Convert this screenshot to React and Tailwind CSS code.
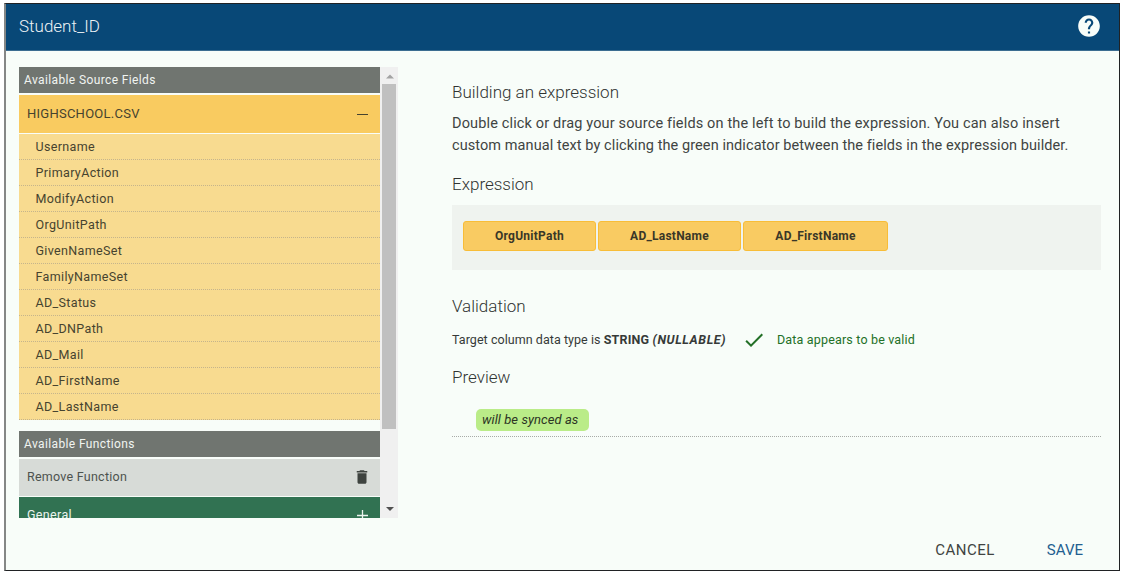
import React from "react";
import { MdCheck, MdDelete, MdHelp } from "react-icons/md";

const sourceFields = [
  "Username",
  "PrimaryAction",
  "ModifyAction",
  "OrgUnitPath",
  "GivenNameSet",
  "FamilyNameSet",
  "AD_Status",
  "AD_DNPath",
  "AD_Mail",
  "AD_FirstName",
  "AD_LastName",
];

function SectionTitle({ children }) {
  return (
    <div className="h-[26px] shrink-0 bg-[#707570] pl-[5px] text-[12px] leading-[26px] tracking-[0.38px] text-[#f0f4f0]">
      {children}
    </div>
  );
}

function SourcePanel() {
  return (
    <div className="flex h-[451px] w-[379px] shrink-0 overflow-hidden">
      <div className="flex w-[361px] flex-col">
        <SectionTitle>Available Source Fields</SectionTitle>
        <div className="mt-[2px] flex h-[38px] shrink-0 items-center justify-between bg-[#f9cb60] pr-[12px] pl-[8px] text-[13px] text-[#46432f]">
          <span className="tracking-[0.25px]">HIGHSCHOOL.CSV</span>
          <span className="h-px w-[11px] bg-[#46432f]" />
        </div>
        <ul className="mt-px">
          {sourceFields.map((field) => (
            <li
              key={field}
              className="h-[26px] border-b border-dotted border-[#c5b48c] bg-[#f8db90] pl-[16.5px] text-[12.5px] leading-[25px] tracking-[0.35px] text-[#46432f]"
            >
              {field}
            </li>
          ))}
        </ul>
        <div className="h-[11px] shrink-0" />
        <SectionTitle>Available Functions</SectionTitle>
        <div className="mt-[2px] flex h-[37px] shrink-0 items-center justify-between bg-[#d7dbd7] pr-[9px] pl-[8px] text-[12.5px] tracking-[0.25px] text-[#4d524e]">
          <span>Remove Function</span>
          <MdDelete className="-mt-[2px] h-[18px] w-[18px] text-[#3e433f]" />
        </div>
        <div className="mt-px flex h-[37px] shrink-0 items-center justify-between bg-[#317252] pr-[12px] pl-[8px] text-[12.5px] tracking-[0.35px] text-[#edf4ef]">
          <span>General</span>
          <svg className="h-[11px] w-[11px]" viewBox="0 0 11 11" stroke="currentColor" strokeWidth="1.3">
            <path d="M5.5 0v11M0 5.5h11" />
          </svg>
        </div>
      </div>
      <div className="flex w-[18px] flex-col items-center bg-[#f0f0f0]">
        <svg className="h-[17px] w-[17px] shrink-0" viewBox="0 0 17 17">
          <path d="M5 11.5h8l-4-4z" fill="#a3a3a3" />
        </svg>
        <div className="h-[345px] w-[14px] bg-[#c0c0c0]" />
        <div className="grow" />
        <svg className="h-[17px] w-[17px] shrink-0" viewBox="0 0 17 17">
          <path d="M5 6h8l-4 4z" fill="#505050" />
        </svg>
      </div>
    </div>
  );
}

function Heading({ children }) {
  return (
    <h2 className="text-[17px] leading-[22px] font-light text-[#303432]">
      {children}
    </h2>
  );
}

function Chip({ width, children }) {
  return (
    <div
      className={`${width} flex h-[30px] items-center justify-center rounded-[3px] border border-[#f8bd38] bg-[#f9cb62] text-[12px] font-bold tracking-[0.25px] text-[#3a3728]`}
    >
      {children}
    </div>
  );
}

function ExpressionPanel() {
  return (
    <div className="ml-[54px] w-[649px] pt-[14px] text-[#363a38]">
      <Heading>Building an expression</Heading>
      <p className="mt-[10px] text-[14.5px] leading-[22px] tracking-[0.08px] whitespace-nowrap text-[#404442]">
        <span className="tracking-[0.15px]">
          Double click or drag your source fields on the left to build the expression. You can also insert
        </span>
        <br />
        custom manual text by clicking the green indicator between the fields in the expression builder.
      </p>
      <div className="mt-[16px]">
        <Heading>Expression</Heading>
      </div>
      <div className="mt-[10px] flex h-[65px] gap-[2px] bg-[#eff3ef] pt-[16px] pl-[11px]">
        <Chip width="w-[133px]">OrgUnitPath</Chip>
        <Chip width="w-[143px]">AD_LastName</Chip>
        <Chip width="w-[145px]">AD_FirstName</Chip>
      </div>
      <div className="mt-[25px]">
        <Heading>Validation</Heading>
      </div>
      <div className="mt-[12px] flex h-[22px] items-center text-[12.5px] whitespace-nowrap">
        <span className="w-[290px] tracking-[0.05px]">
          Target column data type is{" "}
          <b className="tracking-[0.2px]">
            STRING <i className="tracking-[0.6px]">(NULLABLE)</i>
          </b>
        </span>
        <MdCheck className="h-[24px] w-[24px] text-[#237027]" />
        <span className="ml-[11px] tracking-[0.17px] text-[#237027]">Data appears to be valid</span>
      </div>
      <div className="mt-[15px]">
        <Heading>Preview</Heading>
      </div>
      <div className="mt-[21px] h-[28px] border-b border-dotted border-[#a8aca8] pl-[24px]">
        <div className="h-[22px] w-[113px] rounded-[5px] bg-[#baec88] pl-[6px] text-[13px] leading-[22px] tracking-[0.07px] whitespace-nowrap text-[#2c3424] italic">
          will be synced as
        </div>
      </div>
    </div>
  );
}

export default function App() {
  return (
    <div className="h-[573px] w-[1121px] bg-white pt-[3px] pl-[4px] font-['Roboto',sans-serif]">
      <div className="flex h-[568px] w-[1116px] flex-col border border-l-2 border-[#202224] border-l-[#858786] bg-[#f8fdf9]">
        <header className="flex h-[47px] shrink-0 items-center justify-between border-b border-[#3c6d91] bg-[#084877] pr-[17px] pl-[13px]">
          <h1 className="text-[17px] font-light text-[#edf3f5]">Student_ID</h1>
          <MdHelp className="-mt-[2px] h-[26px] w-[26px] text-[#f8fdf9]" />
        </header>
        <main className="flex pt-[16px] pl-[13px]">
          <SourcePanel />
          <ExpressionPanel />
        </main>
        <footer className="mt-[21px] flex justify-end gap-[52px] pr-[36px] text-[15px] leading-[22px]">
          <button className="tracking-[0.5px] text-[#404442]">CANCEL</button>
          <button className="text-[#236090]">SAVE</button>
        </footer>
      </div>
    </div>
  );
}
